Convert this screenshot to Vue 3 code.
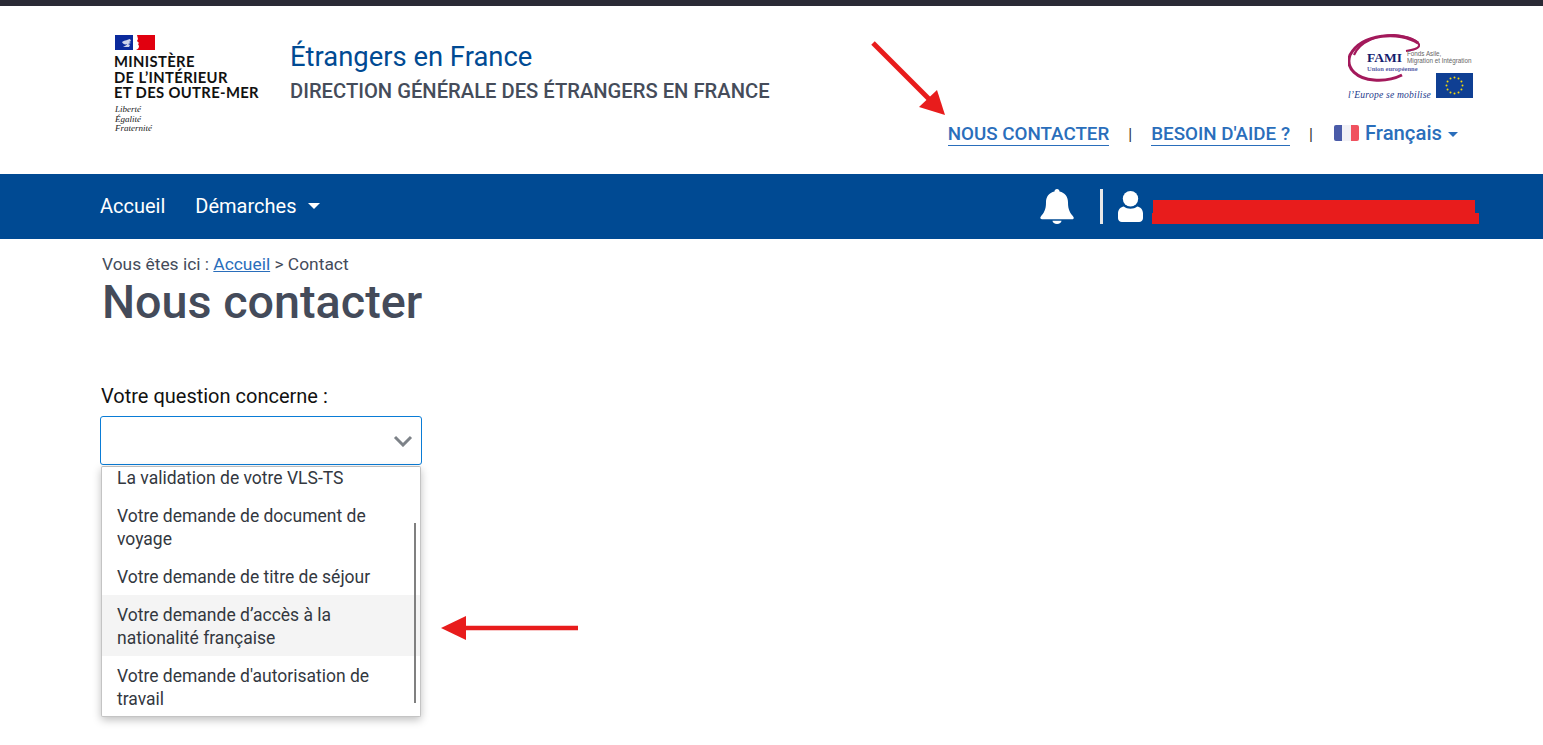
<script setup>
const options = [
  { label: 'La validation de votre VLS-TS' },
  { label: 'Votre demande de document de voyage' },
  { label: 'Votre demande de titre de séjour' },
  { label: 'Votre demande d’accès à la nationalité française', hover: true },
  { label: "Votre demande d'autorisation de travail" },
]
const stars = Array.from({ length: 12 }, (_, i) => {
  const a = (i * Math.PI) / 6
  return { x: 18.5 + 8 * Math.cos(a), y: 12.5 + 8 * Math.sin(a) }
})
</script>

<template>
  <div class="page">
    <div class="topbar"></div>

    <header class="header">
      <div class="logo">
        <svg class="flag" width="41" height="16" viewBox="0 0 41 16">
          <rect x="1" y="1" width="18" height="15" fill="#0b2a9c" />
          <path d="M8 8c3-2 6-2 8-3l1 2-2 1 2 1-3 1 2 1-1 2H9c2-1 4-2 4-3-2 1-4 0-5-2z" fill="#fff" opacity=".8" />
          <path d="M23 1h18v15H22c2-1 3-2 3-4l-1-2 1-1-2-2 1-2z" fill="#e1000f" />
        </svg>
        <div class="ministry">MINISTÈRE<br />DE L’INTÉRIEUR<br />ET DES OUTRE-MER</div>
        <div class="motto">Liberté<br />Égalité<br />Fraternité</div>
      </div>
      <div class="titles">
        <div class="site-title">Étrangers en France</div>
        <div class="site-sub">DIRECTION GÉNÉRALE DES ÉTRANGERS EN FRANCE</div>
      </div>
      <div class="header-right">
        <svg class="fami" width="125" height="68" viewBox="0 0 125 68">
          <path d="M70 10C52-2 14 0 2 22c-5 14 8 24 24 25 12 1 22-2 28-5" fill="none" stroke="#a3195b" stroke-width="3" />
          <path d="M6 22C12 8 30 2 46 2c14 1 26 6 25 11-1 3-7 4-13 5" fill="none" stroke="#a3195b" stroke-width="2.200" />
          <text x="19" y="29" class="fami-name">FAMI</text>
          <text x="59" y="23" class="fami-small">Fonds Asile,</text>
          <text x="59" y="29.500" class="fami-small">Migration et Intégration</text>
          <text x="19" y="38" class="fami-ue">Union européenne</text>
          <text x="0" y="65" class="fami-slogan">l’Europe se mobilise</text>
          <rect x="88" y="40" width="37" height="25" fill="#0f3f93" />
          <circle v-for="(s, i) in stars" :key="i" :cx="88 + s.x" :cy="40 + s.y" r="1" fill="#f5d90a" />
        </svg>
        <div class="links">
          <a class="link">NOUS CONTACTER</a>
          <span class="sep">|</span>
          <a class="link">BESOIN D'AIDE ?</a>
          <span class="sep">|</span>
          <div class="lang">
            <span class="lang-flag"><i></i><i></i><i></i></span>
            <span>Français</span>
            <span class="lang-caret"></span>
          </div>
        </div>
      </div>
    </header>

    <nav class="nav">
      <a class="nav-item">Accueil</a>
      <a class="nav-item">Démarches<span class="nav-caret"></span></a>
      <div class="nav-right">
        <svg width="34" height="35" viewBox="0 0 34 37" preserveAspectRatio="none">
          <path d="M17 0c1.500 0 2.500 1 2.500 2.600C25 3.700 28 8.500 28 14c0 8 2 11 5.500 15.500 .6 1.500 0 2.500-1.500 2.500H2C.500 32 0 31 .500 29.500 4 25 6 22 6 14c0-5.500 3-10.300 8.500-11.400C14.500 1 15.500 0 17 0z" fill="#fff" />
          <path d="M12.500 33.500h9c0 2-2 3.500-4.500 3.500s-4.500-1.500-4.500-3.500z" fill="#fff" />
        </svg>
        <span class="nav-divider"></span>
        <svg width="25" height="31" viewBox="0 0 26 32" preserveAspectRatio="none">
          <circle cx="13" cy="8" r="8" fill="#fff" />
          <path d="M6 16c4 3 10 3 14 0 3 .5 6 3 6 7v5c0 2-2 4-4 4H4c-2 0-4-2-4-4v-5c0-4 3-6.500 6-7z" fill="#fff" />
        </svg>
        <div class="redacted"><span></span><span></span></div>
      </div>
    </nav>

    <main class="main">
      <div class="crumbs">Vous êtes ici : <a>Accueil</a> &gt; Contact</div>
      <h1 class="heading">Nous contacter</h1>
      <label class="field-label">Votre question concerne :</label>
      <div class="select-wrap">
        <div class="select">
          <svg width="20" height="12" viewBox="0 0 20 12">
            <path d="M2 2l8 8 8-8" fill="none" stroke="#7d8288" stroke-width="3" />
          </svg>
        </div>
        <div class="dropdown">
          <ul class="options">
            <li v-for="o in options" :key="o.label" :class="{ hover: o.hover }">{{ o.label }}</li>
          </ul>
          <span class="thumb"></span>
        </div>
      </div>
    </main>

    <svg class="annot annot-top" width="80" height="80" viewBox="0 0 80 80">
      <path d="M3 3l56 56" stroke="#e81c1c" stroke-width="5" />
      <path d="M75 75L49 67 67 50z" fill="#e81c1c" />
    </svg>
    <svg class="annot annot-side" width="140" height="26" viewBox="0 0 140 26">
      <path d="M20 13h118" stroke="#e81c1c" stroke-width="4.500" />
      <path d="M1 13L26 1v24z" fill="#e81c1c" />
    </svg>
  </div>
</template>

<style scoped>
.page {
  position: relative;
  height: 745px;
  overflow: hidden;
  background: #fff;
  font-family: Roboto, "Liberation Sans", sans-serif;
}
.topbar {
  height: 6px;
  background: #2a2a35;
}
.header {
  display: flex;
  height: 168px;
  padding: 0 70px 0 114px;
}
.logo {
  width: 176px;
  padding-top: 28px;
}
.flag {
  display: block;
}
.ministry {
  margin-top: 4px;
  font-family: Lato, sans-serif;
  font-weight: 700;
  font-size: 14.800px;
  line-height: 15.600px;
  letter-spacing: 0.35px;
  color: #111;
}
.motto {
  margin: 4px 0 0 1px;
  font-family: "Liberation Serif", serif;
  font-style: italic;
  font-size: 9px;
  line-height: 9.800px;
  color: #222;
}
.titles {
  padding-top: 33px;
}
.site-title {
  font-size: 27.400px;
  line-height: 36px;
  color: #004a93;
}
.site-sub {
  margin-top: 2px;
  font-size: 20.200px;
  font-weight: 500;
  line-height: 28px;
  color: #454c5a;
}
.header-right {
  margin-left: auto;
  display: flex;
  flex-direction: column;
  align-items: flex-end;
  padding-top: 27px;
}
.fami-name {
  font-family: "Liberation Serif", serif;
  font-weight: 700;
  font-size: 13.500px;
  fill: #14206e;
}
.fami-small {
  font-family: "Liberation Sans", sans-serif;
  font-size: 6.300px;
  fill: #666;
}
.fami-ue {
  font-family: "Liberation Serif", serif;
  font-size: 6.500px;
  font-weight: 700;
  fill: #5a63a8;
}
.fami-slogan {
  font-family: "Liberation Serif", serif;
  font-style: italic;
  font-size: 9.600px;
  letter-spacing: 0.2px;
  fill: #1d3a8c;
}
.links {
  display: flex;
  align-items: center;
  margin-top: 22px;
  padding-right: 15px;
  font-weight: 500;
}
.link {
  font-size: 18.800px;
  line-height: 22px;
  color: #2a6ebb;
  border-bottom: 1px solid #2a6ebb;
}
.sep {
  margin: 0 19px;
  font-size: 16px;
  font-weight: 400;
  color: #333;
}
.lang {
  display: flex;
  align-items: center;
  margin: -4px 0 0 2px;
  font-size: 20.300px;
  color: #2a6ebb;
}
.lang-flag {
  display: flex;
  width: 25px;
  height: 16px;
  margin-right: 6px;
  border-radius: 2px;
  overflow: hidden;
}
.lang-flag i {
  flex: 1;
}
.lang-flag i:nth-child(1) {
  background: #4a5ba8;
}
.lang-flag i:nth-child(2) {
  background: #f1f1f6;
}
.lang-flag i:nth-child(3) {
  background: #f0525f;
}
.lang-caret {
  margin: 3px 0 0 6px;
  border-top: 5px solid #2a6ebb;
  border-left: 5px solid transparent;
  border-right: 5px solid transparent;
}
.nav {
  display: flex;
  align-items: center;
  height: 65px;
  padding: 0 64px 0 100px;
  background: #004a93;
}
.nav-item {
  margin: 0 30px 2px 0;
  font-size: 20px;
  color: #fff;
}
.nav-caret {
  display: inline-block;
  margin-left: 11px;
  vertical-align: 4px;
  border-top: 6px solid #fff;
  border-left: 6px solid transparent;
  border-right: 6px solid transparent;
}
.nav-right {
  margin-left: auto;
  display: flex;
  align-items: center;
}
.nav-divider {
  width: 3px;
  height: 35px;
  margin: 0 15px 0 26px;
  background: #e8e8e8;
}
.redacted {
  display: flex;
  flex-direction: column;
  margin: 10px 0 0 9px;
}
.redacted span {
  display: block;
  width: 322px;
  height: 13px;
  margin-left: 1px;
  background: #e81c1c;
}
.redacted span:last-child {
  width: 327px;
  height: 11px;
  margin-left: 0;
}
.main {
  padding: 14px 0 0 100px;
}
.crumbs {
  margin-left: 2px;
  font-size: 17.400px;
  line-height: 22px;
  color: #444b5a;
}
.crumbs a {
  color: #2a6ebb;
  text-decoration: underline;
}
.heading {
  margin: 0 0 0 2px;
  font-size: 46.700px;
  font-weight: 500;
  line-height: 54px;
  color: #444b5a;
}
.field-label {
  display: block;
  margin: 55px 0 0 1px;
  font-size: 20px;
  line-height: 24px;
  color: #111;
}
.select-wrap {
  position: relative;
  width: 322px;
  margin-top: 8px;
}
.select {
  display: flex;
  align-items: center;
  justify-content: flex-end;
  box-sizing: border-box;
  height: 49px;
  padding-right: 8px;
  border: 1px solid #0a7cd6;
  border-radius: 3px;
}
.dropdown {
  position: absolute;
  top: 50px;
  left: 1px;
  box-sizing: border-box;
  width: 320px;
  height: 251px;
  overflow: hidden;
  background: #fff;
  border: 1px solid #c4c4c4;
  border-top-color: #bbb;
  border-radius: 2px;
  box-shadow: 0 3px 8px rgba(0, 0, 0, 0.25);
}
.options {
  margin: -9px 0 0;
  padding: 0;
  list-style: none;
}
.options li {
  padding: 8.500px 30px 6.500px 15px;
  font-size: 17.500px;
  line-height: 23px;
  color: #33383f;
}
.options li.hover {
  background: #f4f4f4;
}
.thumb {
  position: absolute;
  top: 56px;
  right: 4px;
  width: 2px;
  height: 180px;
  background: #808080;
}
.annot {
  position: absolute;
}
.annot-top {
  left: 870px;
  top: 40px;
}
.annot-side {
  left: 440px;
  top: 615px;
}
</style>
